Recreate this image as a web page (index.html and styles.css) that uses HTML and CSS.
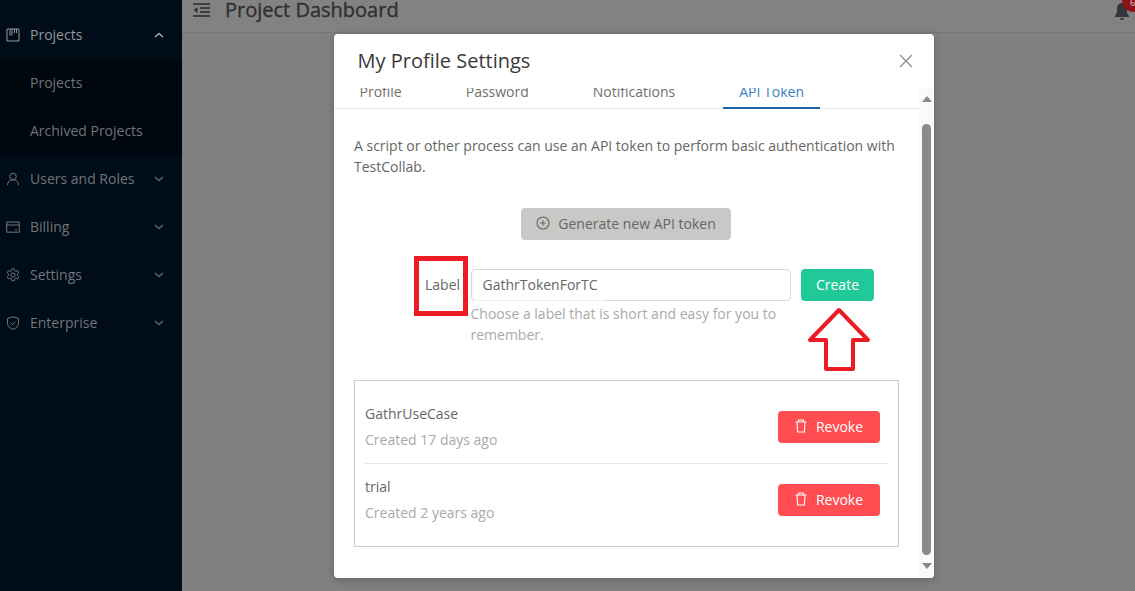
FILE: index.html
```html
<!DOCTYPE html>
<html lang="en">
<head>
<meta charset="utf-8">
<title>My Profile Settings</title>
<link rel="stylesheet" href="styles.css">
</head>
<body>
<div class="app">
  <aside class="sidebar">
    <div class="nav-item nav-open">
      <svg class="nav-icon" viewBox="0 0 14 14"><path d="M1 1h12v12H1z M4 1v6.5 M6 1v6.5 M8.5 1v4 M10.5 1v4" /></svg>
      <span class="nav-label">Projects</span>
      <svg class="chev" viewBox="0 0 10 6"><path d="M1 5l4-3.5L9 5" /></svg>
    </div>
    <div class="submenu">
      <div class="sub-item">Projects</div>
      <div class="sub-item">Archived Projects</div>
    </div>
    <div class="nav-item">
      <svg class="nav-icon" viewBox="0 0 14 14"><circle cx="7" cy="4.5" r="3.3"/><path d="M1.5 13.2c0-3.2 2.2-5.4 5.5-5.4s5.5 2.2 5.5 5.4"/></svg>
      <span class="nav-label">Users and Roles</span>
      <svg class="chev" viewBox="0 0 10 6"><path d="M1 1l4 3.5L9 1" /></svg>
    </div>
    <div class="nav-item">
      <svg class="nav-icon" viewBox="0 0 14 14"><path d="M.7 2h12.6v10.2H.7z M.7 5h12.6 M9 9.8h2.2"/></svg>
      <span class="nav-label">Billing</span>
      <svg class="chev" viewBox="0 0 10 6"><path d="M1 1l4 3.5L9 1" /></svg>
    </div>
    <div class="nav-item">
      <svg class="nav-icon" viewBox="0 0 14 14"><circle cx="7" cy="7" r="2.2"/><path d="M5.8.8h2.4l.4 1.8 1.3.7 1.7-.6 1.2 2.1-1.3 1.2v1.5l1.3 1.2-1.2 2.1-1.7-.6-1.3.7-.4 1.8H5.8l-.4-1.8-1.3-.7-1.7.6-1.2-2.1 1.3-1.2V6L1.2 4.8l1.2-2.1 1.7.6 1.3-.7z"/></svg>
      <span class="nav-label">Settings</span>
      <svg class="chev" viewBox="0 0 10 6"><path d="M1 1l4 3.5L9 1" /></svg>
    </div>
    <div class="nav-item">
      <svg class="nav-icon" viewBox="0 0 14 14"><path d="M7 .8l5.5 1.6v5c0 2.9-2.4 4.8-5.5 5.9-3.1-1.1-5.5-3-5.5-5.9v-5z M4.6 6.8l1.8 1.8 3-3.1"/></svg>
      <span class="nav-label">Enterprise</span>
      <svg class="chev" viewBox="0 0 10 6"><path d="M1 1l4 3.5L9 1" /></svg>
    </div>
  </aside>
  <main class="main">
    <header class="topbar">
      <svg class="menu-icon" viewBox="0 0 17 14"><path class="menu-lines" d="M0 1h17 M7 5h10 M7 9h10 M0 13h17"/><path class="menu-arrow" d="M4.5 4L0.8 7l3.7 3z"/></svg>
      <h1 class="page-title">Project Dashboard</h1>
      <div class="bell">
        <svg class="bell-icon" viewBox="0 0 16 17"><path d="M8 0c-3 0-5 2.300-5 5.500v4L1 13v1h14v-1l-2-3.500v-4C13 2.300 11 0 8 0z"/><path d="M6 15h4a2 2 0 0 1-4 0z"/></svg>
        <span class="badge">6</span>
      </div>
    </header>
  </main>
</div>

<section class="modal">
  <div class="modal-head">
    <h2 class="modal-title">My Profile Settings</h2>
    <svg class="close" viewBox="0 0 14 14"><path d="M1 1l12 12M13 1L1 13"/></svg>
  </div>
  <div class="modal-scroll">
    <div class="modal-body">
      <nav class="tabs">
        <span class="tab">Profile</span>
        <span class="tab">Password</span>
        <span class="tab">Notifications</span>
        <span class="tab tab-active">API Token</span>
      </nav>
      <div class="pane">
        <p class="intro">A script or other process can use an API token to perform basic authentication with TestCollab.</p>
        <div class="gen-row">
          <button class="btn btn-gen">
            <svg class="gen-icon" viewBox="0 0 14 14"><circle cx="7" cy="7" r="6"/><path d="M7 4.300v5.400M4.300 7h5.400"/></svg>
            Generate new API token
          </button>
        </div>
        <div class="form-row">
          <label class="field-label" for="token-label">Label</label>
          <div class="field">
            <div class="input-wrap"><input class="input" id="token-label" value="GathrTokenForTC"></div>
            <p class="hint">Choose a label that is short and easy for you to remember.</p>
          </div>
          <button class="btn btn-create">Create</button>
        </div>
        <div class="token-list">
          <div class="token">
            <div class="token-info">
              <div class="token-name">GathrUseCase</div>
              <div class="token-date">Created 17 days ago</div>
            </div>
            <button class="btn btn-revoke">
              <svg class="trash" viewBox="0 0 12 14"><path d="M.5 3h11 M3.500 3V1h5v2 M2 3l.6 10h6.800L10 3"/></svg>
              Revoke
            </button>
          </div>
          <div class="token">
            <div class="token-info">
              <div class="token-name">trial</div>
              <div class="token-date">Created 2 years ago</div>
            </div>
            <button class="btn btn-revoke">
              <svg class="trash" viewBox="0 0 12 14"><path d="M.5 3h11 M3.500 3V1h5v2 M2 3l.6 10h6.800L10 3"/></svg>
              Revoke
            </button>
          </div>
        </div>
      </div>
    </div>
    <div class="scrollbar">
      <span class="arrow arrow-up"></span>
      <span class="thumb"></span>
      <span class="arrow arrow-down"></span>
    </div>
  </div>
</section>

<div class="mark-box"></div>
<svg class="mark-arrow" viewBox="0 0 64 66"><path d="M32 3L3 33h16v29h27V33h15z"/></svg>
</body>
</html>
```

FILE: styles.css
```css
* { box-sizing: border-box; }
html, body { margin: 0; height: 100%; overflow: hidden; }
body { font-family: "Open Sans", sans-serif; font-size: 14px; background: #808080; color: #666; }

.app { display: flex; height: 591px; }

.sidebar { width: 182px; flex: none; background: #000c18; padding-top: 11px; color: #6f757b; }
.nav-item { height: 48px; display: flex; align-items: center; padding: 0 18px 0 6px; }
.nav-open { color: #94989c; }
.nav-icon { width: 14px; height: 14px; flex: none; fill: none; stroke: currentColor; stroke-width: 1; margin-right: 10px; }
.nav-label { flex: 1; line-height: 20px; }
.chev { width: 10px; height: 6px; fill: none; stroke: #5f656c; stroke-width: 1.600; }
.nav-open .chev { stroke: #a4a7aa; }
.submenu { background: #00060d; }
.sub-item { height: 48px; line-height: 48px; padding-left: 30px; }

.main { flex: 1; min-width: 0; background: #808080; }
.topbar { height: 33px; display: flex; align-items: flex-start; padding-left: 11px; border-bottom: 1px solid #777; background: #828282; position: relative; overflow: hidden; }
.menu-icon { width: 17px; height: 14px; margin: 3px 15px 0 0; flex: none; }
.menu-lines { fill: none; stroke: #2a2a2a; stroke-width: 1.300; }
.menu-arrow { fill: #2a2a2a; }
.page-title { margin: 0; font-size: 20px; font-weight: 400; line-height: 20px; color: #2e2e2e; -webkit-text-stroke: .3px #2e2e2e; }
.bell { margin-left: auto; position: relative; width: 21px; height: 32px; flex: none; }
.bell-icon { position: absolute; left: 0; top: 3px; width: 16px; height: 17px; fill: #333539; }
.badge { position: absolute; left: 8px; top: -12px; width: 24px; height: 24px; border-radius: 50%; background: #8f1018; color: #ccc; font-size: 9px; line-height: 30px; padding-left: 8px; }

.modal { position: absolute; left: 334px; top: 34px; width: 600px; height: 544px; background: #fff; border-radius: 4px; box-shadow: 0 2px 8px rgba(0,0,0,.22); display: flex; flex-direction: column; overflow: hidden; }
.modal-head { height: 54px; flex: none; display: flex; align-items: center; justify-content: space-between; padding: 0 21px 0 23.5px; }
.modal-title { margin: 0; font-size: 20px; font-weight: 400; line-height: 54px; color: #3a3a3a; }
.close { width: 14px; height: 14px; fill: none; stroke: #8c8c8c; stroke-width: 1.300; }

.modal-scroll { flex: 1; min-height: 0; display: flex; }
.modal-body { flex: 1; min-width: 0; overflow: hidden; }
.tabs { display: flex; gap: 32px; padding-left: 9.5px; margin-top: -6px; border-bottom: 1px solid #e6e6e6; height: 27px; color: #707070; }
.tab { padding: 0 16px; line-height: 20px; height: 27px; white-space: nowrap; border-bottom: 2px solid transparent; }
.tab-active { color: #3c7fc0; border-bottom-color: #1f63ad; }
.pane { padding: 26px 20px 0; }
.intro { margin: 0; width: 545px; line-height: 21px; color: #666; }
.gen-row { display: flex; margin-top: 31px; padding-left: 167px; }

.btn { display: inline-flex; align-items: center; justify-content: center; height: 32px; border: 0; border-radius: 4px; font: inherit; padding: 0 0 2px; white-space: nowrap; }
.btn-gen { background: #c8c8c6; color: #666; width: 210px; }
.gen-icon { width: 14px; height: 14px; fill: none; stroke: #666; stroke-width: 1.100; margin-right: 8px; }
.form-row { display: flex; align-items: flex-start; margin-top: 29px; padding-left: 71px; }
.field-label { width: 45.5px; flex: none; line-height: 32px; color: #666; }
.field { width: 320.5px; flex: none; }
.input-wrap { position: relative; }
.input-wrap::after { content: ""; position: absolute; left: 4px; bottom: 0; width: 129px; height: 1px; background: #f2f2f2; }
.input { display: block; width: 100%; height: 32px; border: 1px solid #d9d9d9; border-radius: 4px; padding: 0 11px 2px; font: inherit; color: #666; background: #fff; outline: 0; }
.hint { margin: 2px 0 0; line-height: 21px; color: #aaa; }
.btn-create { margin-left: 10px; background: #20c997; color: #fff; width: 73px; }

.token-list { border: 1px solid #ccc; margin-top: 35px; padding: 10px; width: 545px; }
.token { display: flex; align-items: center; justify-content: space-between; height: 73px; padding: 10px 8px 10px 0; border-bottom: 1px solid #e6e6e6; }
.token:last-child { height: 72px; border-bottom: 0; }
.token-name { line-height: 26px; color: #666; }
.token-date { line-height: 26px; color: #aaa; }
.btn-revoke { background: #ff4d52; color: #fff; width: 102px; }
.trash { width: 12px; height: 14px; fill: none; stroke: #fff; stroke-width: 1.100; margin-right: 9px; }

.scrollbar { width: 15px; flex: none; background: #fafafa; display: flex; flex-direction: column; align-items: center; }
.thumb { width: 9px; height: 431px; border-radius: 5px; background: #8a8a8a; margin-top: 22px; }
.arrow { width: 0; height: 0; border-left: 5px solid transparent; border-right: 5px solid transparent; }
.arrow-up { border-bottom: 6px solid #8a8a8a; margin-top: 8px; }
.arrow-down { border-top: 6px solid #8a8a8a; margin-top: 8px; }

.mark-box { position: absolute; left: 414px; top: 256px; width: 54px; height: 60px; border: 5px solid #ed1c24; }
.mark-arrow { position: absolute; left: 807px; top: 307px; width: 64px; height: 66px; fill: #fff; stroke: #ed1c24; stroke-width: 4; stroke-linejoin: round; }
```
